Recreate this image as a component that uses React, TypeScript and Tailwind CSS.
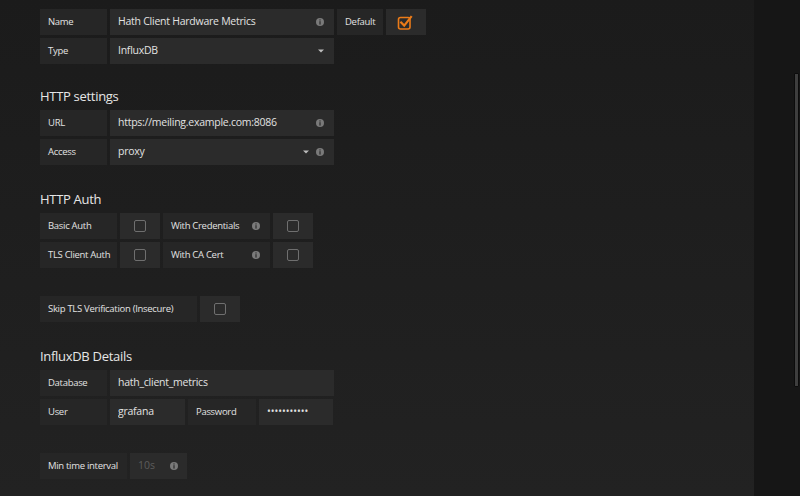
import React from 'react';

const font = { fontFamily: '"Open Sans", "Liberation Sans", sans-serif' };

function InfoIcon() {
  return (
    <svg width="8" height="8" viewBox="0 0 8 8" className="shrink-0">
      <circle cx="4" cy="4" r="4" fill="#7a7a7a" />
      <rect x="3.4" y="1.4" width="1.2" height="1.1" fill="#2b2b2b" />
      <rect x="3.4" y="3.2" width="1.2" height="3.4" fill="#2b2b2b" />
    </svg>
  );
}

function Caret() {
  return (
    <svg width="6" height="4" viewBox="0 0 6 4" className="shrink-0">
      <path d="M0 0.5 L6 0.5 L3 3.5 Z" fill="#bdbdbd" />
    </svg>
  );
}

function Checkbox({ checked = false }: { checked?: boolean }) {
  if (checked) {
    return (
      <svg width="16" height="16" viewBox="0 0 16 16" className="-ml-[2px]">
        <rect x="1.5" y="3.5" width="11.5" height="11.5" rx="2" fill="none" stroke="#eb7b18" strokeWidth="1.6" />
        <path d="M4.2 8.6 L7.2 11.6 L14 3" fill="none" stroke="#eb7b18" strokeWidth="2.2" strokeLinecap="square" />
      </svg>
    );
  }
  return <div className="h-[12px] w-[12px] rounded-[2px] border border-[#6f6f6f]" />;
}

function Label({ w, children }: { w: string; children: React.ReactNode }) {
  return (
    <div className={`${w} flex h-full items-center whitespace-nowrap bg-[#262626] px-2 text-[9.5px] tracking-[-0.3px] text-[#e2e2e2]`}>
      {children}
    </div>
  );
}

function Input({ w, children, info, caret }: { w: string; children: React.ReactNode; info?: boolean; caret?: boolean }) {
  return (
    <div className={`${w} flex h-full items-center gap-[7px] bg-[#2b2b2b] pl-2 pr-[10px] text-[10.5px] tracking-[-0.25px] text-[#e2e2e2]`}>
      <span className="flex-1 truncate">{children}</span>
      {caret && <Caret />}
      {info && <InfoIcon />}
    </div>
  );
}

function CheckCell({ checked }: { checked?: boolean }) {
  return (
    <div className="flex h-full w-[40px] items-center justify-center bg-[#2b2b2b]">
      <Checkbox checked={checked} />
    </div>
  );
}

function Row({ children, className = '' }: { children: React.ReactNode; className?: string }) {
  return <div className={`flex h-[26px] gap-[3px] ${className}`}>{children}</div>;
}

function Heading({ children, className = '' }: { children: React.ReactNode; className?: string }) {
  return (
    <h3 className={`h-[16px] text-[13px] leading-[16px] tracking-[-0.3px] text-[#e6e6e6] ${className}`}>{children}</h3>
  );
}

export default function App() {
  return (
    <div className="flex h-[496px] w-[800px] overflow-hidden bg-[#161616]" style={font}>
      <div className="w-[754px] bg-gradient-to-b from-[#1b1b1b] to-[#222222] pl-10 pt-[9px]">
        <Row>
          <Label w="w-[67px]">Name</Label>
          <Input w="w-[224px]" info>Hath Client Hardware Metrics</Input>
          <Label w="w-[46px]">Default</Label>
          <CheckCell checked />
        </Row>
        <Row className="mt-[3px]">
          <Label w="w-[67px]">Type</Label>
          <Input w="w-[224px]" caret>InfluxDB</Input>
        </Row>

        <Heading className="mt-[24px]">HTTP settings</Heading>
        <Row className="mt-[6px]">
          <Label w="w-[67px]">URL</Label>
          <Input w="w-[224px]" info>https://meiling.example.com:8086</Input>
        </Row>
        <Row className="mt-[3px]">
          <Label w="w-[67px]">Access</Label>
          <Input w="w-[224px]" caret info>proxy</Input>
        </Row>

        <Heading className="mt-[26px]">HTTP Auth</Heading>
        <Row className="mt-[6px]">
          <Label w="w-[77px]">Basic Auth</Label>
          <CheckCell />
          <div className="flex h-full w-[107px] items-center justify-between whitespace-nowrap bg-[#262626] pl-2 pr-[10px] text-[9.5px] tracking-[-0.3px] text-[#e2e2e2]">
            <span>With Credentials</span>
            <InfoIcon />
          </div>
          <CheckCell />
        </Row>
        <Row className="mt-[3px]">
          <Label w="w-[77px]">TLS Client Auth</Label>
          <CheckCell />
          <div className="flex h-full w-[107px] items-center justify-between whitespace-nowrap bg-[#262626] pl-2 pr-[10px] text-[9.5px] tracking-[-0.3px] text-[#e2e2e2]">
            <span>With CA Cert</span>
            <InfoIcon />
          </div>
          <CheckCell />
        </Row>

        <Row className="mt-[28px]">
          <Label w="w-[157px]">Skip TLS Verification (Insecure)</Label>
          <CheckCell />
        </Row>

        <Heading className="mt-[26px]">InfluxDB Details</Heading>
        <Row className="mt-[6px]">
          <Label w="w-[67px]">Database</Label>
          <Input w="w-[224px]">hath_client_metrics</Input>
        </Row>
        <Row className="mt-[3px]">
          <Label w="w-[67px]">User</Label>
          <Input w="w-[75px]">grafana</Input>
          <Label w="w-[68px]">Password</Label>
          <Input w="w-[74px]">
            <span className="text-[10px] tracking-[0px]">•••••••••••</span>
          </Input>
        </Row>

        <Row className="mt-[28px] gap-[1px]">
          <Label w="w-[87px]">Min time interval</Label>
          <div className="flex h-full w-[57px] items-center justify-between bg-[#2b2b2b] pl-2 pr-[9px] text-[10.5px] text-[#5c5c5c]">
            <span>10s</span>
            <InfoIcon />
          </div>
        </Row>
      </div>
      <div className="flex flex-1 justify-end pt-[73px] pr-[1px]">
        <div className="h-[314px] w-[5px] rounded-[1px] border border-[#0c0c0c] bg-[#3e3e3e]" />
      </div>
    </div>
  );
}
